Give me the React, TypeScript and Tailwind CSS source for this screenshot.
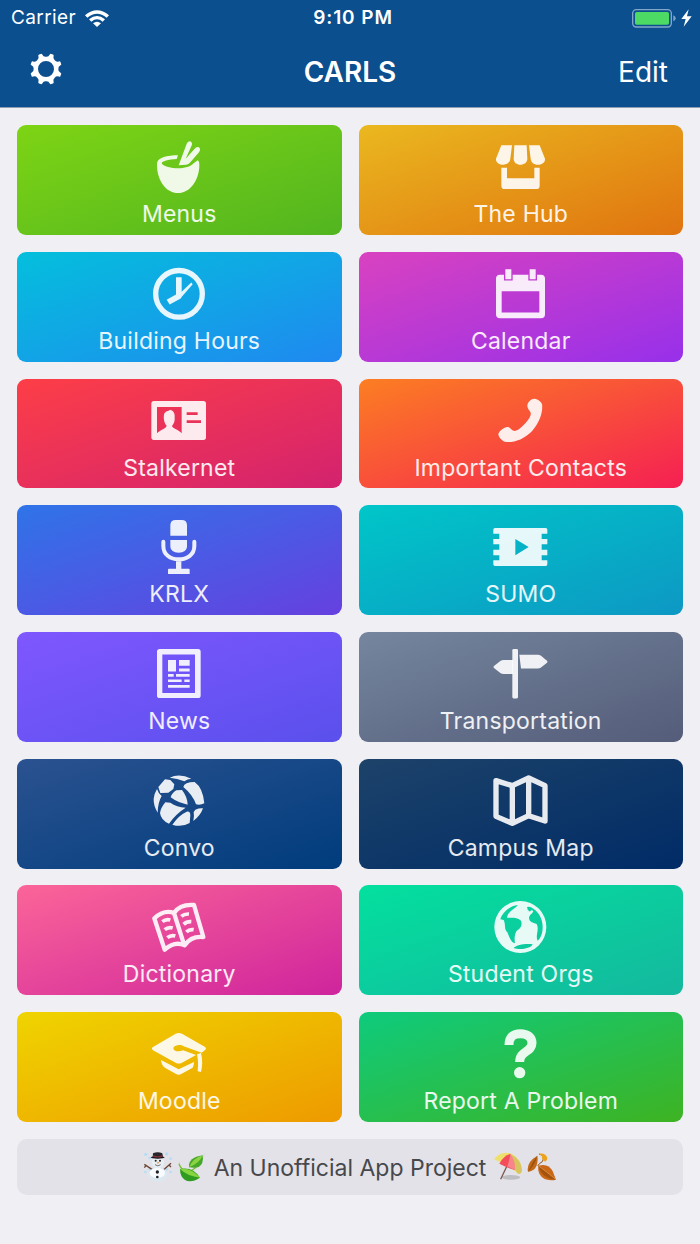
import type { ReactNode } from "react";

type Tile = { label: string; gradient: string; viewBox: string; art: ReactNode };

const tiles: Tile[] = [
  {
    label: "Menus",
    gradient: "bg-[linear-gradient(to_bottom_right,#7ed414,#52b520)]",
    viewBox: "177 35 180 180",
    art: (
      <>
        <path d="M201 114C203 97 232 90 264 90L260 101C235 102 215 108 215 114C220 124 245 129 264 129C290 129 303 122 311 114L323 105C327 108 328 112 328 118C328 165 300 203 264 203C228 203 201 165 201 118Z" />
        <path d="M291 53Q298 45 304 50Q309 56 304 63L287 100L316 68Q324 62 329 68Q333 75 327 81L299 113Q294 118 288 118L266 120Z" />
      </>
    ),
  },
  {
    label: "The Hub",
    gradient: "bg-[linear-gradient(to_bottom_right,#eab81f,#e07410)]",
    viewBox: "182 35 180 180",
    art: (
      <>
        <path d="M213 60H245L240 100C239 111 230 118 219 118C208 118 196 112 197 100Z" />
        <path d="M252 60H289L291 100C291 111 281 118 270 118S250 111 250 100Z" />
        <path d="M296 60H328L344 100C345 112 333 118 322 118C311 118 302 111 301 100Z" />
        <path d="M213 127H230V159H312V127H328V181Q328 191 318 191H223Q213 191 213 181Z" />
      </>
    ),
  },
  {
    label: "Building Hours",
    gradient: "bg-[linear-gradient(to_bottom_right,#04bfdc,#1f89f0)]",
    viewBox: "177 416.4 180 180",
    art: (
      <>
        <circle cx="267" cy="506" r="70" fill="none" stroke="currentColor" strokeWidth="16" />
        <path d="M258 456H275V500L304 472L308 477L276 514L272 520L239 538L230 524L258 508Z" />
      </>
    ),
  },
  {
    label: "Calendar",
    gradient: "bg-[linear-gradient(to_bottom_right,#d942c0,#9730ea)]",
    viewBox: "182 416.4 180 180",
    art: (
      <>
        <path
          fillRule="evenodd"
          d="M209 449H221V466H247V449H294V466H320V449H332Q344 449 344 461V567Q344 579 332 579H209Q197 579 197 567V461Q197 449 209 449ZM214 498V562H327V498Z"
        />
        <path d="M225 432H243V462H225ZM298 432H316V462H298Z" />
      </>
    ),
  },
  {
    label: "Stalkernet",
    gradient: "bg-[linear-gradient(to_bottom_right,#fd3e47,#d3226f)]",
    viewBox: "177 33 180 180",
    art: (
      <path
        fillRule="evenodd"
        d="M192 63H340Q348 63 348 71V172Q348 180 340 180H192Q184 180 184 172V71Q184 63 192 63ZM201 81V160C212 148 228 147 230 137C223 130 220 116 222 104C225 91 236 94 240 89C251 92 255 100 254 112C255 125 251 132 246 138C248 147 266 148 275 160V81ZM290 97V105H323V97ZM290 121V129H333V121Z"
      />
    ),
  },
  {
    label: "Important Contacts",
    gradient: "bg-[linear-gradient(to_bottom_right,#fc7e22,#f51f53)]",
    viewBox: "242 33 180 180",
    art: (
      <path d="M351 77C351 66 364 55 373 56C383 57 392 65 395 72C398 90 392 122 366 152C340 180 306 189 283 185C275 183 265 172 264 163C266 153 282 141 291 141C300 141 302 151 312 153C322 153 333 143 345 130C357 117 363 106 361 98C358 90 351 86 351 77Z" />
    ),
  },
  {
    label: "KRLX",
    gradient: "bg-[linear-gradient(to_bottom_right,#2f74e8,#6640e0)]",
    viewBox: "177 411 180 180",
    art: (
      <>
        <path d="M241 467V436Q241 420 257 420H275Q291 420 291 436V467ZM241 480H291V500Q290 517 266 518Q242 517 241 500Z" />
        <path
          d="M220 485V498C220 525 242 538 266 538S313 525 313 498V485"
          fill="none"
          stroke="currentColor"
          strokeWidth="12"
          strokeLinecap="round"
        />
        <path d="M258 544H274V566H296Q299 566 299 569V582H234V569Q234 566 237 566H258Z" />
      </>
    ),
  },
  {
    label: "SUMO",
    gradient: "bg-[linear-gradient(to_bottom_right,#00c6c8,#0d98c4)]",
    viewBox: "242 411 180 180",
    art: (
      <path
        fillRule="evenodd"
        d="M254 444H406Q411 444 411 449V461H394V477H411V493H394V509H411V526H394V541H411V553Q411 558 406 558H254Q249 558 249 553V541H267V526H249V509H267V493H249V477H267V461H249V449Q249 444 254 444ZM315 477V526L355 501Z"
      />
    ),
  },
  {
    label: "News",
    gradient: "bg-[linear-gradient(to_bottom_right,#7f57ff,#5a50ec)]",
    viewBox: "177 35.7 180 180",
    art: (
      <>
        <path
          fillRule="evenodd"
          d="M209 51H324Q332 51 332 59V190Q332 198 324 198H209Q201 198 201 190V59Q201 51 209 51ZM217 67V183H315V67Z"
        />
        <path d="M234 84H258V118H234ZM267 84H299V101H267ZM267 109H299V118H267ZM234 126H251V134H234ZM258 126H299V134H258ZM234 142H275V150H234ZM283 142H299V150H283ZM234 159H299V167H234Z" />
      </>
    ),
  },
  {
    label: "Transportation",
    gradient: "bg-[linear-gradient(to_bottom_right,#75869e,#545c79)]",
    viewBox: "182 35.7 180 180",
    art: (
      <>
        <rect x="246" y="51" width="17" height="148" rx="4" />
        <path d="M248 84V126H220Q214 126 210 123L191 108Q188 105 191 102L210 87Q214 84 220 84Z" />
        <path d="M267 68H322Q328 68 332 71L350 86Q353 89 350 92L332 106Q328 109 322 109H272Z" />
      </>
    ),
  },
  {
    label: "Convo",
    gradient: "bg-[linear-gradient(to_bottom_right,#2b5290,#003c7c)]",
    viewBox: "177 417 180 180",
    art: (
      <path d="M239 437Q268 422 304 440Q292 441 283 448Q262 439 239 437ZM225 442L241 444L253 457L250 471L235 482L211 483L205 465ZM201 471Q205 484 215 492Q204 510 203 542Q190 520 191 500Q193 484 201 471ZM259 475L276 474Q292 494 293 518Q263 512 242 496Q245 484 259 475ZM280 465Q283 450 314 450Q339 468 343 514Q330 521 318 517Q308 488 280 465ZM226 511Q234 512 241 512Q260 525 287 527Q258 545 237 575Q213 565 210 543Q212 528 226 511ZM247 578Q266 550 290 539Q301 536 301 550L299 573Q275 587 247 578ZM316 533Q328 528 339 529Q332 550 310 567Q313 550 311 540Z" />
    ),
  },
  {
    label: "Campus Map",
    gradient: "bg-[linear-gradient(to_bottom_right,#1d436a,#002b66)]",
    viewBox: "182 417 180 180",
    art: (
      <path
        d="M197 446L246 461L295 438L344 461V567L295 551L246 574L197 553ZM246 461V574M295 438V551"
        fill="none"
        stroke="currentColor"
        strokeWidth="16"
        strokeLinejoin="round"
      />
    ),
  },
  {
    label: "Dictionary",
    gradient: "bg-[linear-gradient(to_bottom_right,#fb6598,#cf249d)]",
    viewBox: "177 33 180 180",
    art: (
      <g fill="none" stroke="currentColor">
        <path
          d="M193 97Q222 70 252 81Q270 54 312 57L340 153Q303 149 284 178Q254 164 224 191ZM252 81L281 172"
          strokeWidth="13"
          strokeLinejoin="round"
        />
        <path
          d="M217 107Q228 98 241 102M224 131Q235 122 248 126M232 155Q243 146 256 150M274 91Q283 83 297 84M281 115Q290 106 304 107M289 138Q298 129 311 131"
          strokeWidth="11"
        />
      </g>
    ),
  },
  {
    label: "Student Orgs",
    gradient: "bg-[linear-gradient(to_bottom_right,#03e09e,#14b89e)]",
    viewBox: "227 33 180 180",
    art: (
      <path
        fillRule="evenodd"
        d="M237 123A78 78 0 1 1 393 123A78 78 0 1 1 237 123ZM255 100C260 80 283 60 307 57C303 68 279 72 275 95C290 96 303 92 317 104C323 120 312 130 303 136C297 148 297 160 299 172C286 170 280 148 277 140C265 130 272 116 265 102ZM335 63Q345 60 354 68C372 80 382 100 382 122C382 142 376 156 367 164C359 150 373 130 364 114C352 110 342 108 341 96C342 86 351 84 354 75Q348 70 344 77Q335 72 335 63ZM295 186C305 174 335 172 352 175C345 190 310 192 295 186Z"
      />
    ),
  },
  {
    label: "Moodle",
    gradient: "bg-[linear-gradient(to_bottom_right,#efd400,#ee9a00)]",
    viewBox: "177 414 180 180",
    art: (
      <>
        <path
          fillRule="evenodd"
          d="M257 443Q266 439 276 443L344 482Q351 487 345 492L335 500L281 481C274 475 256 475 250 485C250 497 268 498 279 493L318 507L276 530Q266 535 257 530L189 493Q182 487 189 483Z"
        />
        <path d="M321 505L333 501Q340 530 333 558L323 556Q326 526 321 505Z" />
        <path d="M213 522L266 550L312 528Q312 537 308 545L275 563Q266 569 257 563L226 546Q214 538 213 522Z" />
      </>
    ),
  },
  {
    label: "Report A Problem",
    gradient: "bg-[linear-gradient(to_bottom_right,#0ecb7d,#3eb322)]",
    viewBox: "227 414 180 180",
    art: (
      <>
        <path
          d="M281 477C281 453 294 443 315 443C337 443 350 454 350 471C350 499 313 494 313 528"
          fill="none"
          stroke="currentColor"
          strokeWidth="27"
        />
        <circle cx="313" cy="560" r="17" />
      </>
    ),
  },
];

const gearPath = (() => {
  const at = (deg: number, r: number) => {
    const a = (deg * Math.PI) / 180;
    return `${(50 + r * Math.cos(a)).toFixed(2)} ${(50 + r * Math.sin(a)).toFixed(2)}`;
  };
  let d = `M${at(14.5, 45)}`;
  for (let k = 0; k < 8; k++) {
    const c = 22.5 + 45 * k;
    d += `Q${at(c - 7, 49)} ${at(c - 3, 48)}L${at(c + 3, 48)}Q${at(c + 7, 49)} ${at(c + 8, 45)}`;
    d += `Q${at(c + 10, 37)} ${at(c + 22.5, 37)}Q${at(c + 35, 37)} ${at(c + 37, 45)}`;
  }
  return `${d}ZM50 26A24 24 0 1 0 50 74A24 24 0 1 0 50 26Z`;
})();

function StatusBar() {
  return (
    <div className="grid h-9 grid-cols-[1fr_auto_1fr] items-center pr-2 pl-[11px] text-[19px]">
      <div className="flex items-center gap-[9px]">
        <span className="font-[375] tracking-[0.4px]">Carrier</span>
        <svg className="h-[17px] w-6" viewBox="0 0 72 51" fill="currentColor">
          <path d="M0 16Q36 -14 72 16L65 23Q36 -1 7 23Z" />
          <path d="M12 28Q36 8 60 28L53 35Q36 21 19 35Z" />
          <path d="M24 40Q36 30 48 40L36 51Z" />
        </svg>
      </div>
      <span className="pl-[3px] font-semibold tracking-[0.9px]">9:10 PM</span>
      <div className="flex items-center justify-end gap-[5px]">
        <svg className="h-[19px] w-11" viewBox="0 0 132 57" fill="none">
          <rect x="2" y="2" width="116" height="52" rx="11" stroke="#82a5c8" strokeWidth="4" />
          <rect x="9" y="9" width="102" height="38" rx="5" fill="#4cd964" />
          <path d="M124 19Q131 22 131 28T124 37Z" fill="#82a5c8" />
        </svg>
        <svg className="h-[18px] w-[11px]" viewBox="0 0 33 54" fill="currentColor">
          <path d="M23 1L1 30H14L8 53L32 22H18Z" />
        </svg>
      </div>
    </div>
  );
}

function Snowman() {
  return (
    <svg className="size-[30px]" viewBox="0 0 90 90">
      <g fill="#b4def5">
        <circle cx="8" cy="7" r="5" /><circle cx="71" cy="6" r="5" /><circle cx="20" cy="18" r="4" />
        <circle cx="83" cy="20" r="4" /><circle cx="7" cy="60" r="4" /><circle cx="83" cy="60" r="4" />
        <circle cx="20" cy="52" r="4" /><circle cx="71" cy="52" r="4" />
      </g>
      <path d="M28 53L4 37M9 41L4 47M62 53L84 34M78 39L84 45" stroke="#6d4634" strokeWidth="4" />
      <ellipse cx="45" cy="68" rx="29" ry="21" fill="#dce8f0" />
      <ellipse cx="43" cy="63" rx="23" ry="15" fill="#f8fcff" />
      <circle cx="45" cy="31" r="18" fill="#e8eff4" />
      <path d="M30 4Q44 -3 58 4L60 16Q44 21 29 16Z" fill="#25252b" />
      <ellipse cx="44" cy="16" rx="21" ry="4" fill="#17171c" />
      <path d="M30 10Q44 15 59 10V14Q44 19 30 14Z" fill="#7d3038" />
      <circle cx="38" cy="26" r="3" fill="#222" /><circle cx="51" cy="26" r="3" fill="#222" />
      <path d="M43 29L50 32L43 35Z" fill="#f18a24" />
      <path d="M36 38Q44 45 53 38" fill="none" stroke="#333" strokeWidth="2" />
      <circle cx="43" cy="60" r="5" fill="#202226" /><circle cx="43" cy="75" r="4" fill="#202226" />
    </svg>
  );
}

function Herb() {
  return (
    <svg className="size-[30px]" viewBox="0 0 90 90">
      <path d="M7 28Q4 49 21 68Q69 61 83 4" fill="none" stroke="#d4dcd8" strokeWidth="3" />
      <path d="M6 35Q12 53 30 60Q56 55 69 28" fill="none" stroke="#79bd36" strokeWidth="4" />
      <path d="M36 46Q33 16 77 10Q81 36 65 45Q54 49 36 46Z" fill="#45a829" />
      <path d="M36 46Q46 20 77 10Q69 33 36 46Z" fill="#8bd343" />
      <path d="M9 51Q47 43 69 77Q43 94 24 84Q9 74 9 51Z" fill="#2f9c20" />
      <path d="M9 51Q42 45 69 77Q32 73 9 51Z" fill="#86d53e" />
    </svg>
  );
}

function BeachUmbrella() {
  return (
    <svg className="size-[30px]" viewBox="0 0 90 90">
      <ellipse cx="54" cy="76" rx="28" ry="7" fill="#bebdc2" />
      <path d="M45 35L23 82" stroke="#79594c" strokeWidth="4" />
      <path d="M3 22Q21 -4 52 4Q84 18 87 55Q86 66 76 66Q48 40 3 22Z" fill="#eee06a" />
      <path d="M19 35Q32 11 52 6Q68 23 66 54Q44 48 19 35Z" fill="#f34d59" />
      <path d="M43 43Q51 19 52 6Q69 25 66 54Q56 49 43 43Z" fill="#f9848a" />
      <path d="M66 54Q68 25 52 6Q85 21 87 55Q86 66 76 66Z" fill="#d8c55f" />
    </svg>
  );
}

function FallenLeaves() {
  return (
    <svg className="size-[30px]" viewBox="0 0 90 90">
      <path d="M36 6Q56 11 46 29Q36 34 32 42" fill="none" stroke="#8b4b14" strokeWidth="3" />
      <path d="M35 5Q56 1 61 18Q61 25 55 29Q42 22 45 12Z" fill="#eda41c" />
      <path d="M31 11Q35 37 22 52Q11 60 3 59Q-3 31 31 11Z" fill="#c16a17" />
      <path d="M31 11Q24 37 3 59Q16 31 31 11Z" fill="#9a4d10" />
      <path d="M34 41Q64 32 77 58L87 83Q51 90 37 65Q32 53 34 41Z" fill="#c96717" />
      <path d="M34 41Q55 56 87 83Q45 80 34 41Z" fill="#a3530f" />
      <path d="M35 42Q58 58 87 83" fill="none" stroke="#e5a14a" strokeWidth="2" />
    </svg>
  );
}

export default function App() {
  return (
    <main className="flex h-[1244px] w-[700px] flex-col overflow-hidden bg-[#efeff4] font-['Inter',sans-serif]">
      <header className="h-[108px] shrink-0 border-b border-[#8d9db2] bg-[#0b4f8f] text-white">
        <StatusBar />
        <div className="grid h-[70px] grid-cols-[1fr_auto_1fr] items-center pr-8 pl-[30px]">
          <svg className="-mt-1 size-8" viewBox="2 2 96 96" fill="currentColor" fillRule="evenodd" role="img" aria-label="Settings">
            <path d={gearPath} />
          </svg>
          <h1 className="pt-px pl-0.5 text-[28px] font-semibold">CARLS</h1>
          <span className="justify-self-end pt-px text-[28px] font-[375]">Edit</span>
        </div>
      </header>

      <div className="px-[17px] pt-[17.2px]">
        <div className="grid grid-cols-2 gap-x-[17px] gap-y-[16.8px]">
          {tiles.map((tile) => (
            <button
              key={tile.label}
              className={`flex h-[109.9px] flex-col items-center rounded-[9px] pt-3 text-white/90 ${tile.gradient}`}
            >
              <svg className="size-[60px] shrink-0" viewBox={tile.viewBox} fill="currentColor" aria-hidden="true">
                {tile.art}
              </svg>
              <span className="mt-px h-8 text-[23px] leading-8 font-[375] tracking-[0.22px] whitespace-nowrap">{tile.label}</span>
            </button>
          ))}
        </div>

        <footer className="mt-[17px] flex h-14 items-center justify-center rounded-[10px] bg-[#e3e2e8] text-[23px] text-[#47484b]">
          <div className="flex items-center gap-1">
            <Snowman />
            <Herb />
          </div>
          <span className="mx-[7px] pt-0.5 font-[375] whitespace-nowrap">An Unofficial App Project</span>
          <div className="flex items-center gap-1">
            <BeachUmbrella />
            <FallenLeaves />
          </div>
        </footer>
      </div>
    </main>
  );
}
